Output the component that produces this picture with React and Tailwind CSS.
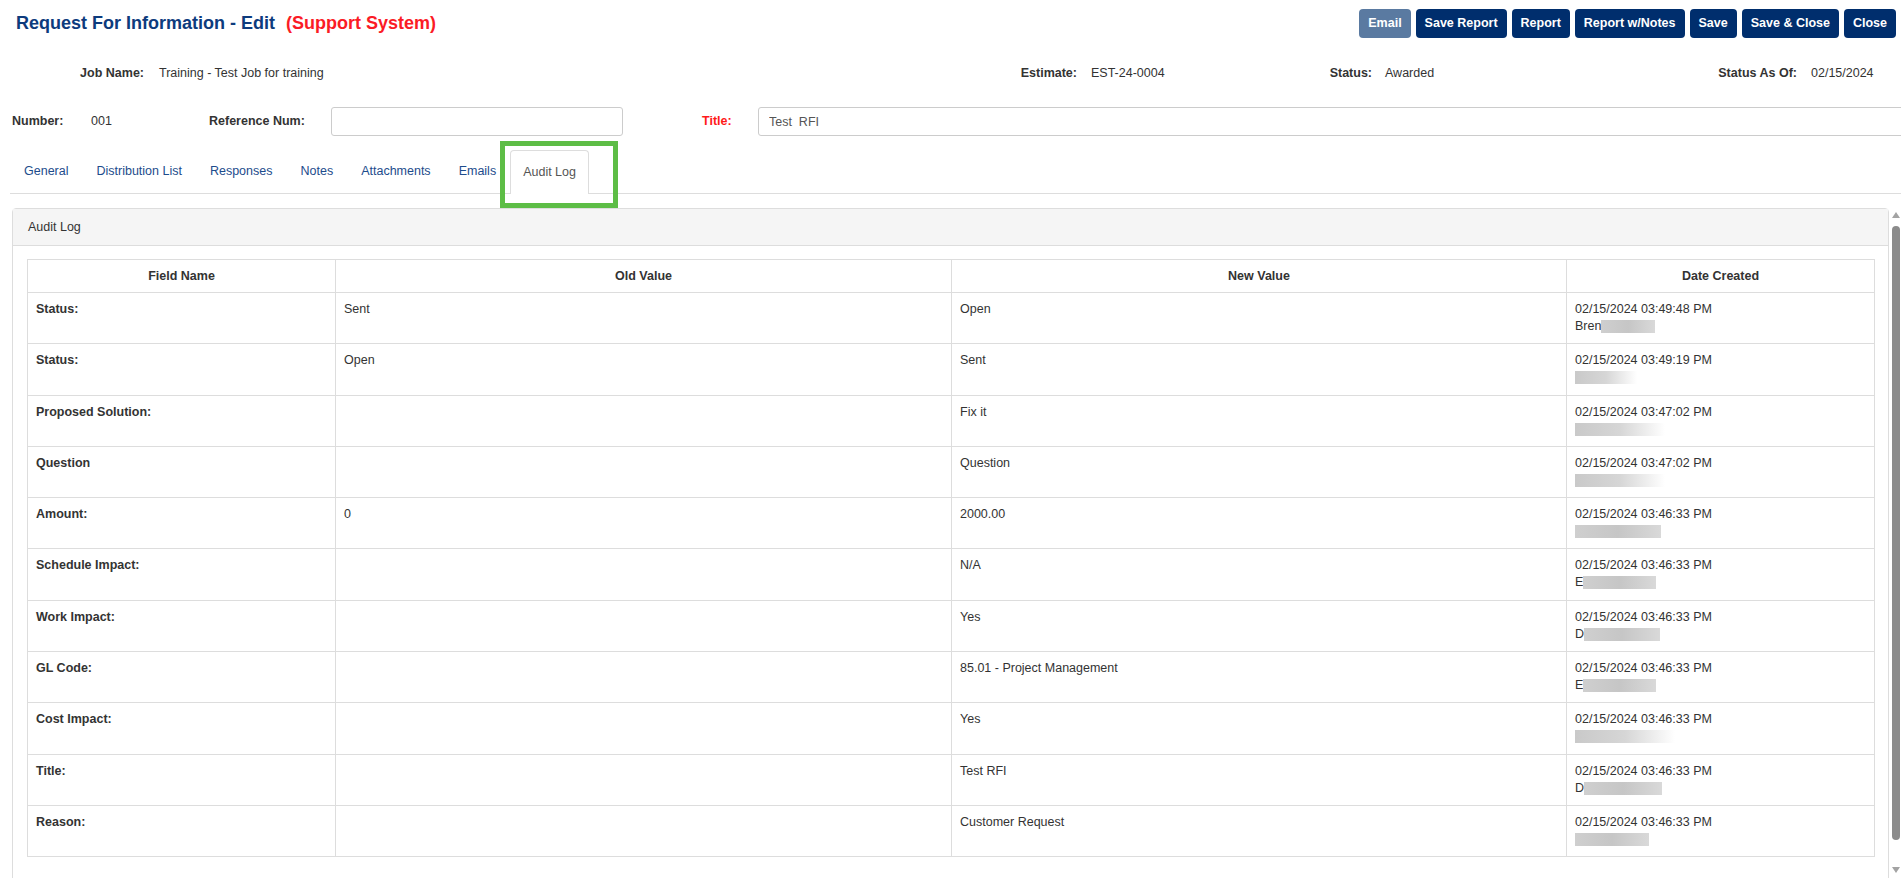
import React from 'react';

const buttons = [
  { label: 'Email', muted: true },
  { label: 'Save Report' },
  { label: 'Report' },
  { label: 'Report w/Notes' },
  { label: 'Save' },
  { label: 'Save & Close' },
  { label: 'Close' },
];

const tabs = ['General', 'Distribution List', 'Responses', 'Notes', 'Attachments', 'Emails'];

// who = visible first letters, blur = width of the blurred name block
const rows = [
  { field: 'Status:', oldValue: 'Sent', newValue: 'Open', date: '02/15/2024 03:49:48 PM', who: 'Bren', blur: 54 },
  { field: 'Status:', oldValue: 'Open', newValue: 'Sent', date: '02/15/2024 03:49:19 PM', who: '', blur: 62, fade: true },
  { field: 'Proposed Solution:', oldValue: '', newValue: 'Fix it', date: '02/15/2024 03:47:02 PM', who: '', blur: 90, fade: true },
  { field: 'Question', oldValue: '', newValue: 'Question', date: '02/15/2024 03:47:02 PM', who: '', blur: 90, fade: true },
  { field: 'Amount:', oldValue: '0', newValue: '2000.00', date: '02/15/2024 03:46:33 PM', who: '', blur: 86 },
  { field: 'Schedule Impact:', oldValue: '', newValue: 'N/A', date: '02/15/2024 03:46:33 PM', who: 'E', blur: 73 },
  { field: 'Work Impact:', oldValue: '', newValue: 'Yes', date: '02/15/2024 03:46:33 PM', who: 'D', blur: 76 },
  { field: 'GL Code:', oldValue: '', newValue: '85.01 - Project Management', date: '02/15/2024 03:46:33 PM', who: 'E', blur: 73 },
  { field: 'Cost Impact:', oldValue: '', newValue: 'Yes', date: '02/15/2024 03:46:33 PM', who: '', blur: 100, fade: true },
  { field: 'Title:', oldValue: '', newValue: 'Test RFI', date: '02/15/2024 03:46:33 PM', who: 'D', blur: 78 },
  { field: 'Reason:', oldValue: '', newValue: 'Customer Request', date: '02/15/2024 03:46:33 PM', who: '', blur: 74 },
];

function Blurred({ who, width, fade }) {
  return (
    <div className="flex items-center h-[17px]">
      {who && <span>{who}</span>}
      <span
        className={`inline-block h-[13px] ${
          fade ? 'bg-gradient-to-r from-[#c9c9c9] via-[#d6d6d6] to-white' : 'bg-gradient-to-r from-[#cfcfcf] via-[#c6c6c6] to-[#d9d9d9]'
        }`}
        style={{ width }}
      ></span>
    </div>
  );
}

export default function App() {
  return (
    <div className="relative w-[1901px] h-[878px] overflow-hidden bg-white text-[12.5px] text-[#333] font-['Liberation_Sans',Arial,sans-serif]">
      {/* Header */}
      <div className="flex items-center justify-between pt-[9px] pr-[5px]">
        <div className="flex items-center h-[29px] pl-[16px] text-[18px] font-bold">
          <span className="text-[#0d3b7d]">Request For Information - Edit</span>
          <span className="ml-[11px] text-[#fb1b25]">(Support System)</span>
        </div>
        <div className="flex gap-[5px]">
          {buttons.map((b) => (
            <button
              key={b.label}
              className={`h-[29px] px-[9px] rounded-[4px] text-white text-[12.5px] font-bold ${
                b.muted ? 'bg-[#5a7aa1]' : 'bg-[#002e6d]'
              }`}
            >
              {b.label}
            </button>
          ))}
        </div>
      </div>

      {/* Job info */}
      <div className="flex items-center h-[20px] mt-[25px]">
        <div className="flex w-[880px] shrink-0">
          <span className="w-[144px] text-right font-bold">Job Name:</span>
          <span className="ml-[15px]">Training - Test Job for training</span>
        </div>
        <div className="flex w-[360px] shrink-0">
          <span className="w-[197px] text-right font-bold">Estimate:</span>
          <span className="ml-[14px]">EST-24-0004</span>
        </div>
        <div className="flex w-[360px] shrink-0">
          <span className="w-[132px] text-right font-bold">Status:</span>
          <span className="ml-[13px]">Awarded</span>
        </div>
        <div className="flex shrink-0">
          <span className="w-[197px] text-right font-bold">Status As Of:</span>
          <span className="ml-[14px]">02/15/2024</span>
        </div>
      </div>

      {/* Number / reference / title */}
      <div className="flex items-center h-[29px] mt-[24px] pl-[12px]">
        <span className="w-[79px] shrink-0 font-bold">Number:</span>
        <span className="w-[118px] shrink-0">001</span>
        <span className="w-[122px] shrink-0 font-bold">Reference Num:</span>
        <input className="w-[292px] shrink-0 h-[29px] border border-[#ccc] rounded-[3px] px-[10px] outline-none" defaultValue="" />
        <span className="ml-[79px] w-[56px] shrink-0 font-bold text-[#ff1a1a]">Title:</span>
        <input
          className="w-[1200px] shrink-0 h-[29px] border border-[#ccc] rounded-[3px] px-[10px] text-[#555] outline-none"
          defaultValue="Test  RFI"
        />
      </div>

      {/* Tabs */}
      <div className="ml-[10px] mt-[14px] flex border-b border-[#ddd] h-[44px]">
        {tabs.map((t) => (
          <div key={t} className="flex items-center px-[14px] h-[43px] text-[#1d4c8c]">
            {t}
          </div>
        ))}
        <div className="flex items-center px-[12px] h-[44px] border border-b-0 border-[#ddd] rounded-t-[4px] bg-white text-[#555] mb-[-1px]">
          Audit Log
        </div>
      </div>

      {/* Highlight annotation */}
      <div className="absolute left-[500px] top-[141px] w-[118px] h-[67px] border-[5px] border-[#5dbd46]"></div>

      {/* Panel + scrollbar */}
      <div className="flex mt-[14px] pl-[12px]">
        <div className="w-[1877px] border border-[#ddd] rounded-t-[4px] pb-[40px]">
          <div className="h-[37px] flex items-center px-[15px] bg-[#f5f5f5] border-b border-[#ddd] text-[#333]">
            Audit Log
          </div>
          <div className="px-[14px] pt-[13px]">
            <table className="w-full table-fixed border-collapse">
              <colgroup>
                <col className="w-[308px]" />
                <col className="w-[616px]" />
                <col className="w-[615px]" />
                <col className="w-[308px]" />
              </colgroup>
              <thead>
                <tr className="h-[33px]">
                  {['Field Name', 'Old Value', 'New Value', 'Date Created'].map((h) => (
                    <th key={h} className="border border-[#ddd] font-bold text-center align-middle">
                      {h}
                    </th>
                  ))}
                </tr>
              </thead>
              <tbody>
                {rows.map((r, i) => (
                  <tr key={i} className="h-[51.3px] leading-[17px]">
                    <td className="border border-[#ddd] px-[8px] pt-[8px] align-top font-bold">{r.field}</td>
                    <td className="border border-[#ddd] px-[8px] pt-[8px] align-top">{r.oldValue}</td>
                    <td className="border border-[#ddd] px-[8px] pt-[8px] align-top">{r.newValue}</td>
                    <td className="border border-[#ddd] px-[8px] pt-[8px] align-top">
                      <div>{r.date}</div>
                      <Blurred who={r.who} width={r.blur} fade={r.fade} />
                    </td>
                  </tr>
                ))}
              </tbody>
            </table>
          </div>
        </div>

        {/* Scrollbar */}
        <div className="ml-[2px] w-[10px] h-[670px] flex flex-col items-center">
          <svg width="8" height="6" viewBox="0 0 8 6" className="mt-[4px]">
            <path d="M4 0 L8 6 L0 6 Z" fill="#a3a3a3" />
          </svg>
          <div className="mt-[8px] w-[8px] h-[614px] rounded-[4px] bg-[#8b8b8b]"></div>
          <svg width="8" height="6" viewBox="0 0 8 6" className="mt-[27px]">
            <path d="M0 0 L8 0 L4 6 Z" fill="#a3a3a3" />
          </svg>
        </div>
      </div>
    </div>
  );
}
